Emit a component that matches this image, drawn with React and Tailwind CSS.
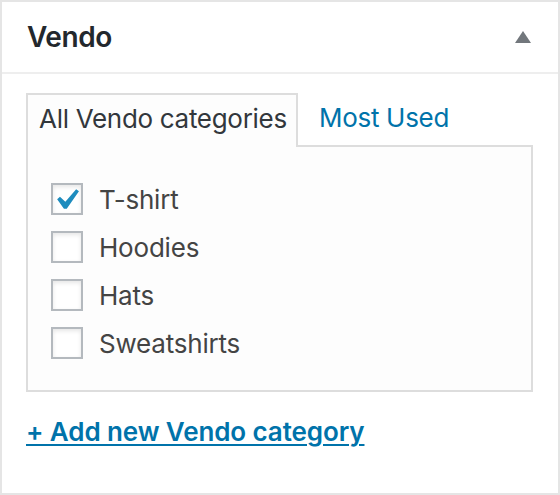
import React from 'react';

const items = [
    { label: 'T-shirt', checked: true },
    { label: 'Hoodies', checked: false },
    { label: 'Hats', checked: false },
    { label: 'Sweatshirts', checked: false },
];

const Checkbox = ({ checked }) => (
    <span className="relative block w-[32px] h-[32px] shrink-0 border-2 border-[#b4b9be] bg-white shadow-[inset_0_2px_4px_rgba(0,0,0,0.1)]">
        {checked && (
            <svg
                viewBox="0 0 20 20"
                className="absolute left-[-8px] top-[-6px] w-[42px] h-[42px]"
            >
                <path
                    fill="#1e8cbe"
                    d="M14.83 4.89l1.34.94-5.81 8.38H9.02L5.78 9.67l1.34-1.25 2.57 2.4z"
                />
            </svg>
        )}
    </span>
);

const App = () => {
    return (
        <div
            className="w-[560px] h-[495px] border-2 border-[#e5e5e5] bg-white"
            style={{ fontFamily: 'Inter, "Noto Sans", sans-serif' }}
        >
            {/* Header */}
            <div className="h-[72px] flex items-center justify-between pl-[25px] pr-[27px] border-b-2 border-[#eeeeee]">
                <h2 className="text-[28px] leading-none font-semibold tracking-[-0.4px] text-[#23282d]">Vendo</h2>
                <svg width="16" height="12" viewBox="0 0 16 12">
                    <polygon points="8,0 16,12 0,12" fill="#72777c" />
                </svg>
            </div>

            {/* Body */}
            <div className="pt-[19px] pl-[24px] pr-[25px]">
                {/* Tabs */}
                <div className="relative z-10 -mb-[2px] flex items-stretch h-[54px]">
                    <div className="w-[272px] border-2 border-b-0 border-[#dddddd] bg-[#fdfdfd] pl-[11px] flex items-center pb-[6px]">
                        <span className="text-[26px] tracking-[-0.3px] text-[#32373c]">All Vendo categories</span>
                    </div>
                    <div className="ml-[21px] flex items-center pb-[6px]">
                        <span className="text-[26px] tracking-[-0.3px] text-[#0073aa]">Most Used</span>
                    </div>
                </div>

                {/* Panel */}
                <div className="h-[247px] border-2 border-[#dddddd] bg-[#fdfdfd] pt-[28px] pl-[23px]">
                    {items.map((item) => (
                        <label key={item.label} className="h-[48px] flex items-center gap-[16px]">
                            <Checkbox checked={item.checked} />
                            <span className="text-[26px] tracking-[-0.2px] text-[#444444]">{item.label}</span>
                        </label>
                    ))}
                </div>

                <a
                    href="#"
                    className="mt-[22px] inline-block text-[26px] leading-[36px] font-semibold tracking-[-0.1px] text-[#0073aa] underline decoration-2 underline-offset-[3px]"
                >
                    + Add new Vendo category
                </a>
            </div>
        </div>
    );
};

export default App;
